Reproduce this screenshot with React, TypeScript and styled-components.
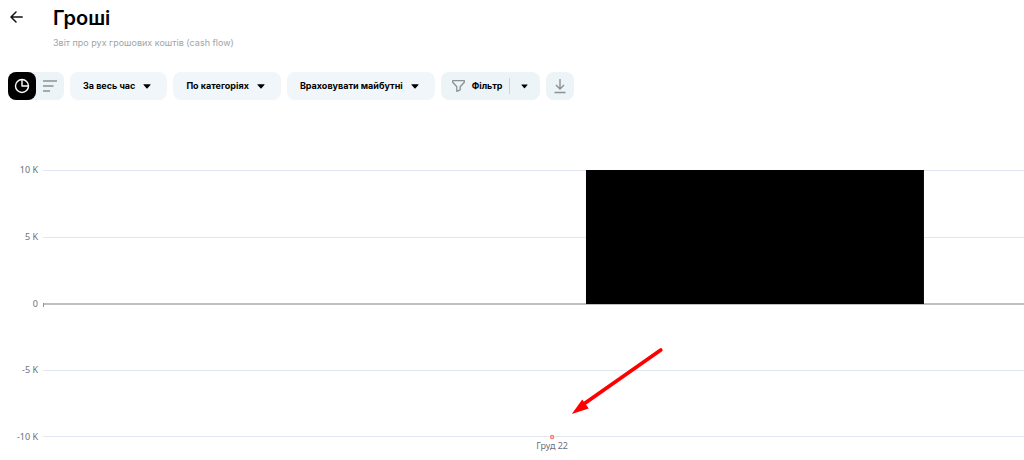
import React from "react";
import styled, { createGlobalStyle } from "styled-components";

const GlobalStyle = createGlobalStyle`
  *, *::before, *::after { box-sizing: border-box; }
  body {
    margin: 0;
    background: #fff;
    color: #000;
    font-family: Inter, "Liberation Sans", sans-serif;
    overflow-x: hidden;
  }
  button { font: inherit; color: inherit; border: 0; padding: 0; cursor: pointer; }
`;

const Header = styled.header`
  display: flex;
  align-items: flex-start;
  gap: 28px;
  padding: 6px 8px 0;
`;

const BackButton = styled.button`
  display: flex;
  align-items: center;
  justify-content: center;
  width: 17px;
  height: 22px;
  background: none;
`;

const Title = styled.h1`
  margin: 0;
  font-size: 20px;
  line-height: 25px;
  font-weight: 600;
`;

const Subtitle = styled.p`
  margin: 5px 0 0;
  font-size: 9px;
  line-height: 14px;
  color: #a3a3a3;
`;

const Toolbar = styled.div`
  display: flex;
  flex-wrap: wrap;
  gap: 6px;
  padding: 22px 8px 0;
`;

const ViewSwitch = styled.div`
  display: flex;
  background: #ecf4f8;
  border-radius: 8px;
`;

const IconButton = styled.button<{ $active?: boolean }>`
  display: flex;
  align-items: center;
  justify-content: center;
  width: 28px;
  height: 28px;
  border-radius: 8px;
  background: ${(p) => (p.$active ? "#000" : "#ecf4f8")};
`;

const DropdownButton = styled.button`
  display: flex;
  align-items: center;
  gap: 8px;
  height: 28px;
  padding: 0 16px 0 13px;
  border-radius: 8px;
  background: #f0f6f9;
  font-size: 9px;
  line-height: 12px;
  font-weight: 700;
  white-space: nowrap;
`;

const FilterGroup = styled.div`
  display: flex;
  align-items: center;
  height: 28px;
  border-radius: 8px;
  background: #ecf4f8;
`;

const FilterButton = styled.button`
  display: flex;
  align-items: center;
  gap: 7px;
  height: 28px;
  padding: 0 6px 0 11px;
  background: none;
  font-size: 9px;
  line-height: 12px;
  font-weight: 700;
`;

const FilterMenuButton = styled.button`
  display: flex;
  align-items: center;
  justify-content: center;
  width: 31px;
  height: 16px;
  background: none;
  border-left: 1px solid #ccd4d8;
`;

const Chart = styled.section`
  display: flex;
  gap: 5px;
  margin-top: 63px;
  font-family: "Noto Sans", "Open Sans", sans-serif;
  font-size: 9px;
  line-height: 14px;
  color: #6e7079;
`;

const YAxis = styled.ol`
  display: flex;
  flex-direction: column;
  justify-content: space-between;
  width: 38px;
  height: 281px;
  margin: 0;
  padding: 0;
  list-style: none;
  text-align: right;
`;

const Plot = styled.svg`
  display: block;
  flex: 1;
  min-width: 0;
  height: 297px;
`;

const Caret = ({ width = 8 }: { width?: number }) => (
  <svg width={width} height="5" viewBox="0 0 8 5" aria-hidden="true">
    <path d="M0.8 0.3H7.2Q7.9 0.3 7.4 0.9L4.5 4.2Q4 4.7 3.5 4.2L0.6 0.9Q0.1 0.3 0.8 0.3Z" fill="#000" />
  </svg>
);

const ticks = ["10 K", "5 K", "0", "-5 K", "-10 K"];
const gridLines = [7, 74, 207, 273];

export default function App() {
  return (
    <>
      <GlobalStyle />
      <Header>
        <BackButton aria-label="Назад">
          <svg width="13" height="12" viewBox="0 0 13 12" fill="none" stroke="#111" strokeWidth="1.5" strokeLinecap="round" strokeLinejoin="round">
            <path d="M12.2 6H1.2M6 1L1 6L6 11" />
          </svg>
        </BackButton>
        <div>
          <Title>Гроші</Title>
          <Subtitle>Звіт про рух грошових коштів (cash flow)</Subtitle>
        </div>
      </Header>

      <Toolbar>
        <ViewSwitch>
          <IconButton $active aria-label="Діаграма">
            <svg width="16" height="16" viewBox="0 0 16 16" fill="none" stroke="#fff" strokeWidth="1.4" strokeLinejoin="round">
              <circle cx="8" cy="8" r="6.5" />
              <path d="M8 1.5V8H14.5" />
            </svg>
          </IconButton>
          <IconButton aria-label="Список">
            <svg width="16" height="14" viewBox="0 0 16 14" fill="none" stroke="#8b9194" strokeWidth="1.7">
              <path d="M1 2H15M1 7H11.5M1 12H8" />
            </svg>
          </IconButton>
        </ViewSwitch>
        <DropdownButton>За весь час<Caret /></DropdownButton>
        <DropdownButton>По категоріях<Caret /></DropdownButton>
        <DropdownButton>Враховувати майбутні<Caret /></DropdownButton>
        <FilterGroup>
          <FilterButton>
            <svg width="13" height="12" viewBox="0 0 13 12" fill="none" stroke="#8b9194" strokeWidth="1.3" strokeLinejoin="round">
              <path d="M0.7 0.7H12.3V2.2L8.2 6.8V9.8L4.8 11.3V6.8L0.7 2.2Z" />
            </svg>
            Фільтр
          </FilterButton>
          <FilterMenuButton aria-label="Параметри фільтра"><Caret width={7} /></FilterMenuButton>
        </FilterGroup>
        <IconButton aria-label="Завантажити">
          <svg width="12" height="16" viewBox="0 0 12 16" fill="none" stroke="#8b9194" strokeWidth="1.4">
            <path d="M6 1V11M2 7L6 11L10 7M0.5 14.5H11.5" />
          </svg>
        </IconButton>
      </Toolbar>

      <Chart aria-label="Рух грошових коштів">
        <YAxis>
          {ticks.map((t) => <li key={t}>{t}</li>)}
        </YAxis>
        <Plot>
          {gridLines.map((y) => (
            <rect key={y} x="0" y={y} width="100%" height="1" fill="#e3e7f1" />
          ))}
          <rect x="0" y="140" width="100%" height="2" fill="#c0c0c2" />
          <rect x="0" y="140" width="1" height="4" fill="#929397" />
          <rect x="55.35%" y="7" width="34.45%" height="134" fill="#000" />
          <svg x="51.9%" y="273" overflow="visible">
            <circle cx="0" cy="1" r="1.5" fill="#fff" stroke="#fa8072" strokeWidth="1.4" />
            <text x="0" y="13" textAnchor="middle" fill="#6e7079">Груд 22</text>
          </svg>
          <svg x="53.9%" y="185" overflow="visible">
            <path d="M89 2L12 56" stroke="#f00" strokeWidth="3.8" strokeLinecap="round" />
            <path d="M0 66L10.5 51.5L17 60.5Z" fill="#f00" />
          </svg>
        </Plot>
      </Chart>
    </>
  );
}
